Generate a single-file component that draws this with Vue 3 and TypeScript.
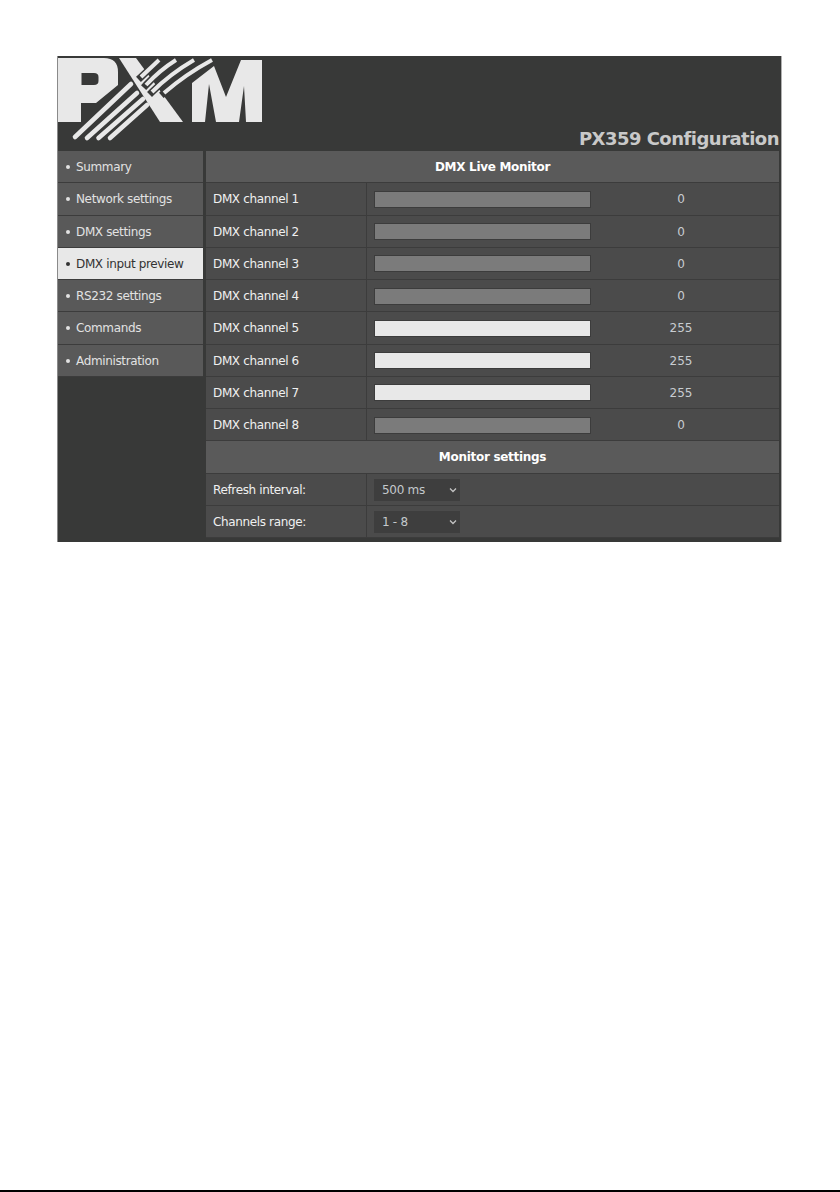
<script setup lang="ts">
interface Channel { name: string; value: number }
const menu: string[] = ['Summary', 'Network settings', 'DMX settings', 'DMX input preview', 'RS232 settings', 'Commands', 'Administration']
const active = 'DMX input preview'
const channels: Channel[] = [0, 0, 0, 0, 255, 255, 255, 0].map((value, i) => ({ name: `DMX channel ${i + 1}`, value }))
const lower: string[] = ['M75 137L131 84', 'M87 138L137 93', 'M98.5 138L143 99', 'M110 138L147 105']
const upper: string[] = ['M141 77L159 60', 'M146 85Q160 70 176 60', 'M152 92Q170 74 194 60', 'M164 93Q186 74 212 60']
</script>

<template>
  <div class="page">
    <div class="frame">
      <header class="head">
        <svg class="logo" width="210" height="90" viewBox="56 56 210 90">
          <path class="ink" fill-rule="evenodd" d="M58 58H104Q118 58 118 72V85L96 103H81V122H58ZM81.5 73V85H94Q98.5 85 98.5 81V77Q98.5 73 94 73Z" />
          <path v-for="(d, i) in lower" :key="'l' + i" class="stripe" :d="d" />
          <path class="ink" d="M119 58H136L183 122H160Z" />
          <path v-for="(d, i) in upper" :key="'g' + i" class="gap" :d="d" />
          <path v-for="(d, i) in upper" :key="'u' + i" class="stripe butt" :d="d" />
          <path class="ink" d="M192 83L214 66L226 97L241 60H262V122H246L244 86L239 122H216L209 84L205 122H192Z" />
        </svg>
        <h1 class="title">PX359 Configuration</h1>
      </header>
      <div class="body">
        <nav class="side">
          <a v-for="item in menu" :key="item" class="item" :class="{ on: item === active }">
            <span class="dot"></span>{{ item }}
          </a>
        </nav>
        <main class="main">
          <div class="section">DMX Live Monitor</div>
          <div v-for="c in channels" :key="c.name" class="row">
            <div class="label">{{ c.name }}</div>
            <div class="cell">
              <div class="bar" :class="{ full: c.value > 0 }"></div>
              <div class="value">{{ c.value }}</div>
            </div>
          </div>
          <div class="section">Monitor settings</div>
          <div class="row">
            <div class="label">Refresh interval:</div>
            <div class="cell">
              <div class="pick">
                <select><option>500 ms</option></select>
                <svg class="chev" width="8" height="6" viewBox="0 0 8 6"><path d="M1 1.5L4 4.5L7 1.5" /></svg>
              </div>
            </div>
          </div>
          <div class="row">
            <div class="label">Channels range:</div>
            <div class="cell">
              <div class="pick">
                <select><option>1 - 8</option></select>
                <svg class="chev" width="8" height="6" viewBox="0 0 8 6"><path d="M1 1.5L4 4.5L7 1.5" /></svg>
              </div>
            </div>
          </div>
        </main>
      </div>
    </div>
    <div class="rule"></div>
  </div>
</template>

<style>
html, body { margin: 0; background: #fff; }
</style>

<style scoped>
.page {
  height: 1192px;
  padding-top: 56px;
  box-sizing: border-box;
  display: flex;
  flex-direction: column;
  justify-content: space-between;
  font-family: "DejaVu Sans", sans-serif;
  font-size: 12px;
  letter-spacing: -0.36px;
  color: #f0f0f0;
}
.frame {
  margin-left: 57px;
  width: 725px;
  height: 486px;
  box-sizing: border-box;
  background: #383938;
  border-left: 1px solid #8a8a8a;
  border-right: 1px solid #b0b0b0;
  padding-right: 2px;
}
.head { height: 95px; display: flex; justify-content: space-between; align-items: flex-end; }
.logo { display: block; align-self: flex-start; margin-left: -2px; }
.ink { fill: #e8e8e8; }
.gap { fill: none; stroke: #383938; stroke-width: 7; stroke-linecap: square; }
.stripe { fill: none; stroke: #e8e8e8; stroke-width: 4.6; stroke-linecap: round; }
.stripe.butt { stroke-width: 4; stroke-linecap: butt; }
.title {
  margin: 0 0 1px;
  font-size: 18px;
  line-height: 22px;
  font-weight: 700;
  letter-spacing: -0.52px;
  color: #c9c9c9;
  white-space: nowrap;
}
.body { display: flex; gap: 3px; }
.side { width: 145px; display: flex; flex-direction: column; }
.item {
  height: 32.25px;
  box-sizing: border-box;
  display: flex;
  align-items: center;
  padding: 1px 0 0 8px;
  background: #595959;
  border-bottom: 1px solid #3c3c3c;
  color: #e2e2e2;
}
.item.on { background: #e8e8e8; color: #333; }
.dot { width: 4px; height: 4px; border-radius: 50%; background: currentColor; margin-right: 6px; }
.main { flex: 1; display: flex; flex-direction: column; }
.section {
  height: 32.25px;
  box-sizing: border-box;
  display: flex;
  align-items: center;
  justify-content: center;
  padding-top: 1px;
  background: #5a5a5a;
  border-bottom: 1px solid #3c3c3c;
  font-weight: 700;
  letter-spacing: -0.3px;
  color: #fff;
}
.row {
  height: 32.25px;
  box-sizing: border-box;
  display: grid;
  grid-template-columns: 160px 1fr;
  background: #4b4b4b;
  border-bottom: 1px solid #3c3c3c;
}
.label { display: flex; align-items: center; padding: 1px 0 0 7px; }
.cell {
  display: flex;
  align-items: center;
  padding: 1px 8px 0 7px;
  border-left: 1px solid #3c3c3c;
}
.bar {
  width: 217px;
  height: 17px;
  box-sizing: border-box;
  background: #7b7b7b;
  border: 1px solid #3c3c3c;
}
.bar.full { background: #e8e8e8; }
.value { flex: 1; text-align: center; color: #c8cdd1; letter-spacing: 0; }
.pick { position: relative; width: 86px; height: 22px; }
select {
  appearance: none;
  display: block;
  width: 100%;
  height: 100%;
  border: 0;
  border-radius: 0;
  padding: 0 0 0 8px;
  background: #3e3e3e;
  color: #c4c9cc;
  font: inherit;
  letter-spacing: -0.3px;
}
.chev { position: absolute; right: 3px; top: 8px; fill: none; stroke: #c4c4c4; stroke-width: 1.3; }
.rule { height: 2px; background: #000; }
</style>
